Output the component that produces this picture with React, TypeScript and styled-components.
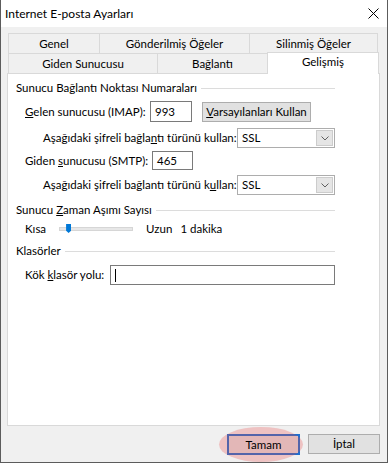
import styled, { createGlobalStyle } from "styled-components";

const GlobalStyle = createGlobalStyle`
  html, body {
    margin: 0;
    padding: 0;
    background: #ffffff;
  }
  body {
    font-family: Lato, "Noto Sans", sans-serif;
    font-size: 11.5px;
    color: #000;
  }
`;

const Window = styled.div`
  width: 388px;
  height: 463px;
  box-sizing: border-box;
  border: 1px solid #5c5c5c;
  border-top: none;
  display: flex;
  flex-direction: column;
  background: #f0f0f0;
`;

const TitleBar = styled.div`
  height: 27px;
  flex: none;
  background: #ffffff;
  display: flex;
  align-items: center;
  justify-content: space-between;
  padding: 0 8px 0 4px;
`;

const Title = styled.span`
  font-size: 12px;
  line-height: 16px;
`;

const Body = styled.div`
  flex: 1;
  display: flex;
  flex-direction: column;
  padding: 6px 7px 0 6px;
`;

const Tabs = styled.div`
  display: flex;
  flex-direction: column;
  margin-left: 2px;
  margin-right: 1px;
`;

const TabRow = styled.div`
  display: flex;
`;

const Tab = styled.div<{ $w: number; $h: number; $active?: boolean }>`
  box-sizing: border-box;
  width: ${({ $w }) => $w}px;
  height: ${({ $h }) => $h}px;
  border: 1px solid #d9d9d9;
  border-bottom: none;
  margin-left: -1px;
  background: ${({ $active }) => ($active ? "#ffffff" : "#f0f0f0")};
  display: flex;
  align-items: center;
  justify-content: center;
  line-height: 16px;
  ${({ $active }) =>
    $active &&
    `
    position: relative;
    z-index: 1;
    margin-top: -1px;
    margin-bottom: -1px;
    height: 22px;
    padding-bottom: 3px;
  `}
`;

const Panel = styled.div`
  box-sizing: border-box;
  height: 353px;
  background: #ffffff;
  border: 1px solid #d9d9d9;
  padding: 6px 44px 0 8px;
  display: flex;
  flex-direction: column;
`;

const GroupHeader = styled.div<{ $mt: number }>`
  display: flex;
  align-items: center;
  height: 16px;
  line-height: 16px;
  margin-top: ${({ $mt }) => $mt}px;
  white-space: nowrap;

  &::after {
    content: "";
    flex: 1;
    height: 1px;
    margin-left: 4px;
    background: #dcdcdc;
  }
`;

const Row = styled.div<{ $mt: number; $h: number; $indent: number }>`
  display: flex;
  align-items: center;
  height: ${({ $h }) => $h}px;
  margin-top: ${({ $mt }) => $mt}px;
  padding-left: ${({ $indent }) => $indent}px;
  white-space: nowrap;
  line-height: 16px;
`;

const Label = styled.span<{ $w?: number }>`
  width: ${({ $w }) => ($w ? `${$w}px` : "auto")};
  flex: none;
`;

const Field = styled.div<{ $w?: number; $grow?: boolean }>`
  box-sizing: border-box;
  width: ${({ $w }) => ($w ? `${$w}px` : "auto")};
  flex: ${({ $grow }) => ($grow ? 1 : "none")};
  height: 100%;
  border: 1px solid #7a7a7a;
  background: #fff;
  padding: 0 4px;
  display: flex;
  align-items: center;
`;

const Caret = styled.span`
  width: 1px;
  height: 13px;
  background: #000;
`;

const PushButton = styled.div<{ $w: number; $default?: boolean }>`
  box-sizing: border-box;
  width: ${({ $w }) => $w}px;
  height: ${({ $default }) => ($default ? 21 : 20)}px;
  flex: none;
  background: #e1e1e1;
  border: ${({ $default }) => ($default ? "2px solid #1e6fd0" : "1px solid #adadad")};
  display: flex;
  align-items: center;
  justify-content: center;
  line-height: 16px;
  position: relative;

  ${({ $default }) =>
    $default &&
    `
    &::after {
      content: "";
      position: absolute;
      left: -10px;
      right: -5px;
      top: -9px;
      bottom: -9px;
      border-radius: 50%;
      background: rgba(232, 70, 70, 0.27);
    }
  `}
`;

const Combo = styled.div`
  box-sizing: border-box;
  width: 98px;
  flex: none;
  height: 100%;
  margin-left: auto;
  border: 1px solid #adadad;
  background: #fff;
  display: flex;
  align-items: center;
  padding: 1px;
`;

const ComboText = styled.span`
  flex: 1;
  padding-left: 3px;
`;

const ComboArrow = styled.div`
  box-sizing: border-box;
  width: 17px;
  height: 100%;
  background: #e5e5e5;
  border: 1px solid #cccccc;
  display: flex;
  align-items: center;
  justify-content: center;
`;

const Track = styled.div`
  position: relative;
  box-sizing: border-box;
  width: 74px;
  height: 4px;
  margin: 0 13px;
  background: #e7e7e7;
  border: 1px solid #d6d6d6;
`;

const Thumb = styled.div`
  position: absolute;
  left: 6px;
  top: -4px;
  width: 5px;
  height: 9px;
  background: #0078d7;
  clip-path: polygon(0 0, 100% 0, 100% 75%, 50% 100%, 0 75%);
`;

const Footer = styled.div`
  display: flex;
  justify-content: flex-end;
  align-items: flex-start;
  gap: 8px;
  padding-top: 8px;
`;

function Chevron() {
  return (
    <svg width="8" height="5" viewBox="0 0 8 5">
      <path d="M0.5 0.5 L4 4 L7.5 0.5" fill="none" stroke="#606060" strokeWidth="1" />
    </svg>
  );
}

function CloseIcon() {
  return (
    <svg width="11" height="11" viewBox="0 0 11 11">
      <path d="M0.5 0.5 L10.5 10.5 M10.5 0.5 L0.5 10.5" stroke="#000" strokeWidth="1" />
    </svg>
  );
}

export default function App() {
  return (
    <>
      <GlobalStyle />
      <Window>
        <TitleBar>
          <Title>Internet E-posta Ayarları</Title>
          <CloseIcon />
        </TitleBar>
        <Body>
          <Tabs>
            <TabRow>
              <Tab $w={92} $h={20}>Genel</Tab>
              <Tab $w={151} $h={20}>Gönderilmiş Öğeler</Tab>
              <Tab $w={129} $h={20}>Silinmiş Öğeler</Tab>
            </TabRow>
            <TabRow>
              <Tab $w={150} $h={20}>Giden Sunucusu</Tab>
              <Tab $w={111} $h={20}>Bağlantı</Tab>
              <Tab $w={112} $h={20} $active>Gelişmiş</Tab>
            </TabRow>
          </Tabs>
          <Panel>
            <GroupHeader $mt={0}>Sunucu Bağlantı Noktası Numaraları</GroupHeader>
            <Row $mt={5} $h={21} $indent={9}>
              <Label $w={125}><u>G</u>elen sunucusu (IMAP):</Label>
              <Field $w={42}>993</Field>
              <PushButton $w={109} style={{ marginLeft: 10 }}>
                <span><u>V</u>arsayılanları Kullan</span>
              </PushButton>
            </Row>
            <Row $mt={6} $h={20} $indent={27}>
              <Label>Aşağıdaki şifreli bağla<u>n</u>tı türünü kullan:</Label>
              <Combo>
                <ComboText>SSL</ComboText>
                <ComboArrow><Chevron /></ComboArrow>
              </Combo>
            </Row>
            <Row $mt={3} $h={19} $indent={9}>
              <Label $w={127}>Giden <u>s</u>unucusu (SMTP):</Label>
              <Field $w={41}>465</Field>
            </Row>
            <Row $mt={5} $h={20} $indent={27}>
              <Label>Aşağıdaki şifreli bağlantı türünü k<u>u</u>llan:</Label>
              <Combo>
                <ComboText>SSL</ComboText>
                <ComboArrow><Chevron /></ComboArrow>
              </Combo>
            </Row>
            <GroupHeader $mt={7}>
              <span>Sunucu <u>Z</u>aman Aşımı Sayısı</span>
            </GroupHeader>
            <Row $mt={3} $h={16} $indent={9}>
              <Label>Kısa</Label>
              <Track>
                <Thumb />
              </Track>
              <Label>Uzun</Label>
              <Label style={{ marginLeft: 8 }}>1 dakika</Label>
            </Row>
            <GroupHeader $mt={6}>Klasörler</GroupHeader>
            <Row $mt={6} $h={20} $indent={9}>
              <Label $w={85}>Kök <u>k</u>lasör yolu:</Label>
              <Field $grow>
                <Caret />
              </Field>
            </Row>
          </Panel>
          <Footer>
            <PushButton $w={73} $default>
              <span style={{ position: "relative", zIndex: 1 }}>Tamam</span>
            </PushButton>
            <PushButton $w={72}>İptal</PushButton>
          </Footer>
        </Body>
      </Window>
    </>
  );
}
